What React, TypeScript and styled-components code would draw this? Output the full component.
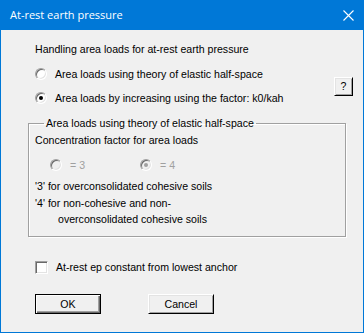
import React from "react";
import styled, { createGlobalStyle, css } from "styled-components";

const Global = createGlobalStyle`
  html, body { margin: 0; padding: 0; background: #f0f0f0; }
  * { box-sizing: border-box; }
`;

const Window = styled.div`
  width: 364px;
  height: 333px;
  display: flex;
  flex-direction: column;
  background: #f0f0f0;
  border: 1px solid #0078d7;
  border-top: none;
  font-family: "Liberation Sans", Arial, sans-serif;
  font-size: 10.6px;
  color: #000;
`;

const TitleBar = styled.div`
  height: 30px;
  margin: 0 -1px;
  background: #0078d7;
  display: flex;
  align-items: center;
  justify-content: space-between;
  padding: 0 10px 0 10px;
  color: #fff;
  font-family: "Open Sans", "Noto Sans", sans-serif;
  font-size: 11px;
`;

const Title = styled.span`
  line-height: 16px;
`;

const CloseIcon = styled.svg`
  width: 11px;
  height: 11px;
`;

const Body = styled.div`
  flex: 1;
  display: flex;
  flex-direction: column;
  padding: 11px 10px 0 27px;
`;

const Label = styled.div<{ $disabled?: boolean; $indent?: number }>`
  height: 16px;
  line-height: 16px;
  white-space: nowrap;
  padding-left: ${(p) => p.$indent ?? 0}px;
  color: ${(p) => (p.$disabled ? "#a0a0a0" : "#000")};
`;

const Heading = styled(Label)`
  margin-left: 7px;
`;

const OptionsRow = styled.div`
  display: flex;
  align-items: center;
  justify-content: space-between;
  margin-top: 9px;
  padding-left: 7px;
`;

const RadioColumn = styled.div`
  display: flex;
  flex-direction: column;
  gap: 8px;
`;

const Choice = styled.label<{ $disabled?: boolean }>`
  display: flex;
  align-items: center;
  gap: 8px;
  height: 16px;
  color: ${(p) => (p.$disabled ? "#a0a0a0" : "#000")};
`;

const RadioMark = styled.span<{ $checked?: boolean; $disabled?: boolean }>`
  position: relative;
  width: 12px;
  height: 12px;
  border-radius: 50%;
  border: 1px solid;
  border-color: #a0a0a0 #ffffff #ffffff #a0a0a0;
  box-shadow: inset 1px 1px 0 #696969, inset -1px -1px 0 #e3e3e3;
  background: ${(p) => (p.$disabled ? "#f0f0f0" : "#fff")};
  flex: none;
  ${(p) =>
    p.$checked &&
    css`
      &::after {
        content: "";
        position: absolute;
        left: 3px;
        top: 3px;
        width: 4px;
        height: 4px;
        border-radius: 50%;
        background: ${p.$disabled ? "#a0a0a0" : "#000"};
      }
    `}
`;

const BevelButton = styled.button<{ $isDefault?: boolean; $w: number; $h: number }>`
  width: ${(p) => p.$w}px;
  height: ${(p) => p.$h}px;
  padding: 0;
  background: #f0f0f0;
  font-family: "Liberation Sans", Arial, sans-serif;
  font-size: 10.6px;
  color: #000;
  display: flex;
  align-items: center;
  justify-content: center;
  ${(p) =>
    p.$isDefault
      ? css`
          border: 1px solid #000;
          box-shadow: inset 1px 1px 0 #fff, inset -1px -1px 0 #696969, inset -2px -2px 0 #a0a0a0;
        `
      : css`
          border: 1px solid;
          border-color: #fff #000 #000 #fff;
          box-shadow: inset 1px 1px 0 #e3e3e3, inset -1px -1px 0 #a0a0a0;
        `}
`;

const Group = styled.fieldset`
  margin: 9px 8px 0 0;
  padding: 1px 0 9px 6px;
  border: 1px solid #a0a0a0;
  box-shadow: inset 1px 1px 0 #fff, 1px 1px 0 #fff;
  min-width: 0;
  width: 318px;
`;

const Legend = styled.legend`
  margin-left: 9px;
  padding: 0 2px;
  height: 16px;
  line-height: 16px;
`;

const DisabledRow = styled.div`
  display: flex;
  margin-top: 9px;
  margin-bottom: 5px;
  padding-left: 15px;
`;

const DisabledChoice = styled(Choice)`
  width: 90px;
`;

const NoteLine = styled(Label)<{ $gapTop?: number }>`
  margin-top: ${(p) => p.$gapTop ?? 0}px;
`;

const CheckRow = styled.label`
  display: flex;
  align-items: center;
  gap: 8px;
  height: 16px;
  margin-top: 22px;
  padding-left: 7px;
`;

const CheckMark = styled.span`
  width: 13px;
  height: 13px;
  border: 1px solid;
  border-color: #a0a0a0 #fff #fff #a0a0a0;
  box-shadow: inset 1px 1px 0 #696969, inset -1px -1px 0 #e3e3e3;
  background: #fff;
  flex: none;
`;

const ButtonRow = styled.div`
  display: flex;
  gap: 47px;
  margin-top: 19px;
  padding-left: 7px;
`;

export default function App() {
  return (
    <>
      <Global />
      <Window>
        <TitleBar>
          <Title>At-rest earth pressure</Title>
          <CloseIcon viewBox="0 0 11 11">
            <path d="M0.5 0.5 L10.5 10.5 M10.5 0.5 L0.5 10.5" stroke="#fff" strokeWidth="1.1" fill="none" />
          </CloseIcon>
        </TitleBar>
        <Body>
          <Heading>Handling area loads for at-rest earth pressure</Heading>
          <OptionsRow>
            <RadioColumn>
              <Choice>
                <RadioMark />
                Area loads using theory of elastic half-space
              </Choice>
              <Choice>
                <RadioMark $checked />
                Area loads by increasing using the factor: k0/kah
              </Choice>
            </RadioColumn>
            <BevelButton $w={19} $h={19}>?</BevelButton>
          </OptionsRow>
          <Group>
            <Legend>Area loads using theory of elastic half-space</Legend>
            <Label>Concentration factor for area loads</Label>
            <DisabledRow>
              <DisabledChoice $disabled>
                <RadioMark $disabled />= 3
              </DisabledChoice>
              <DisabledChoice $disabled>
                <RadioMark $disabled $checked />= 4
              </DisabledChoice>
            </DisabledRow>
            <NoteLine>'3' for overconsolidated cohesive soils</NoteLine>
            <NoteLine $gapTop={1}>'4' for non-cohesive and non-</NoteLine>
            <NoteLine $indent={23}>overconsolidated cohesive soils</NoteLine>
          </Group>
          <CheckRow>
            <CheckMark />
            At-rest ep constant from lowest anchor
          </CheckRow>
          <ButtonRow>
            <BevelButton $isDefault $w={66} $h={20}>OK</BevelButton>
            <BevelButton $w={66} $h={20}>Cancel</BevelButton>
          </ButtonRow>
        </Body>
      </Window>
    </>
  );
}
